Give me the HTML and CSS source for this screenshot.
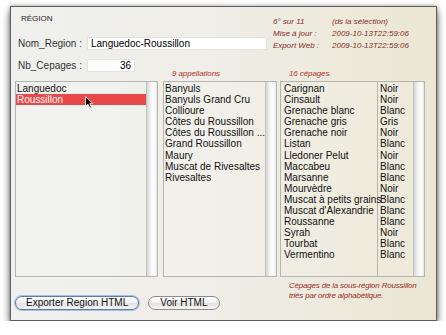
FILE: index.html
```html
<!DOCTYPE html>
<html>
<head>
<meta charset="utf-8">
<link rel="stylesheet" href="styles.css">
<title>Région</title>
</head>
<body>
<div class="window">
    <div class="top">
        <div class="form">
            <div class="title">RÉGION</div>
            <div class="field first">
                <label>Nom_Region :</label>
                <input class="name" value="Languedoc-Roussillon">
            </div>
            <div class="field">
                <label>Nb_Cepages :</label>
                <input class="num" value="36">
            </div>
        </div>
        <div class="info">
            <span>6° sur 11</span><span>(ds la sélection)</span>
            <span>Mise à jour :</span><span>2009-10-13T22:59:06</span>
            <span>Export Web :</span><span>2009-10-13T22:59:06</span>
        </div>
    </div>

    <div class="panes">
        <div class="pane regions">
            <div class="count"></div>
            <div class="listbox">
                <div class="items">
                    <div class="row">Languedoc</div>
                    <div class="row selected">Roussillon</div>
                </div>
                <div class="scroll"></div>
            </div>
        </div>
        <div class="pane appellations">
            <div class="count">9 appellations</div>
            <div class="listbox">
                <div class="items">
                    <div class="row">Banyuls</div>
                    <div class="row">Banyuls Grand Cru</div>
                    <div class="row">Collioure</div>
                    <div class="row">Côtes du Roussillon</div>
                    <div class="row">Côtes du Roussillon ...</div>
                    <div class="row">Grand Roussillon</div>
                    <div class="row">Maury</div>
                    <div class="row">Muscat de Rivesaltes</div>
                    <div class="row">Rivesaltes</div>
                </div>
                <div class="scroll"></div>
            </div>
        </div>
        <div class="pane cepages">
            <div class="count">16 cépages.</div>
            <div class="listbox">
                <div class="items names">
                    <div class="row">Carignan</div>
                    <div class="row">Cinsault</div>
                    <div class="row">Grenache blanc</div>
                    <div class="row">Grenache gris</div>
                    <div class="row">Grenache noir</div>
                    <div class="row">Listan</div>
                    <div class="row">Lledoner Pelut</div>
                    <div class="row">Maccabeu</div>
                    <div class="row">Marsanne</div>
                    <div class="row">Mourvèdre</div>
                    <div class="row">Muscat à petits grains</div>
                    <div class="row">Muscat d'Alexandrie</div>
                    <div class="row">Roussanne</div>
                    <div class="row">Syrah</div>
                    <div class="row">Tourbat</div>
                    <div class="row">Vermentino</div>
                </div>
                <div class="items types">
                    <div class="row">Noir</div>
                    <div class="row">Noir</div>
                    <div class="row">Blanc</div>
                    <div class="row">Gris</div>
                    <div class="row">Noir</div>
                    <div class="row">Blanc</div>
                    <div class="row">Noir</div>
                    <div class="row">Blanc</div>
                    <div class="row">Blanc</div>
                    <div class="row">Noir</div>
                    <div class="row">Blanc</div>
                    <div class="row">Blanc</div>
                    <div class="row">Blanc</div>
                    <div class="row">Noir</div>
                    <div class="row">Blanc</div>
                    <div class="row">Blanc</div>
                </div>
                <div class="scroll"></div>
            </div>
        </div>
    </div>

    <div class="bottom">
        <div class="buttons">
            <button class="default">Exporter Region HTML</button>
            <button>Voir HTML</button>
        </div>
        <div class="note">
            Cépages de la sous-région Roussillon<br>
            triés par ordre alphabétique.
        </div>
    </div>

    <svg class="cursor" width="9" height="13" viewBox="0 0 9 13">
        <path d="M0.5 0.5 L0.5 10.5 L3 8.2 L4.8 12 L6.4 11.3 L4.7 7.6 L8 7.6 Z" fill="#000" stroke="#fff" stroke-width="0.8"/>
    </svg>
</div>
</body>
</html>
```

FILE: styles.css
```css
html {
    background-color: white;
}
body {
    margin: 0;
    font-family: "Liberation Sans", Arial, sans-serif;
    font-size: 10px;
    color: #111;
}
.window {
    position: relative;
    box-sizing: border-box;
    margin: 6px 0 0 10px;
    width: 427px;
    height: 315px;
    border: 1px solid #5e5e5e;
    background: linear-gradient(90deg, #f0f0ee 0%, #efeee8 45%, #ece7d3 100%);
    box-shadow: 0 5px 8px rgba(0, 0, 0, 0.55), 0 0 4px rgba(0, 0, 0, 0.35);
}

/* top part: form and info */
.top {
    display: flex;
    height: 61px;
}
.form {
    width: 255px;
    padding-left: 7px;
}
.title {
    padding: 6px 0 0 3px;
    font-size: 8px;
    line-height: 12px;
    color: #222;
}
.field {
    display: flex;
    align-items: center;
    height: 14px;
    margin-top: 8px;
}
.field.first {
    margin-top: 11px;
}
.field label {
    width: 69px;
    color: #333;
}
.field input {
    box-sizing: border-box;
    height: 13px;
    border: 1px solid #e2e2de;
    background: white;
    font: 10px "Liberation Sans", Arial, sans-serif;
    color: #000;
    padding: 0 3px;
}
.name {
    width: 180px;
}
.num {
    width: 48px;
    text-align: right;
}
.info {
    display: grid;
    grid-template-columns: 59px auto;
    align-content: start;
    padding-top: 9px;
    font-size: 8px;
    font-style: italic;
    line-height: 12px;
    color: #8c2a2a;
}

/* lists */
.panes {
    display: flex;
    padding-left: 4px;
}
.pane {
    display: flex;
    flex-direction: column;
}
.regions {
    width: 143px;
}
.appellations {
    width: 114px;
    margin-left: 5px;
}
.cepages {
    width: 145px;
    margin-left: 3px;
}
.count {
    height: 13px;
    padding-left: 9px;
    font-size: 8px;
    font-style: italic;
    letter-spacing: -0.1px;
    line-height: 12px;
    color: #b8302c;
}
.listbox {
    display: flex;
    height: 196px;
    box-sizing: border-box;
    border: 1px solid #b4b4b0;
    background: rgba(255, 255, 255, 0.12);
}
.items {
    flex: 1;
    padding-top: 1px;
}
.row {
    height: 11.1px;
    line-height: 11px;
    padding-left: 1px;
    white-space: nowrap;
    overflow: hidden;
}
.selected {
    background: #e84848;
    color: white;
}
.cepages .names {
    flex: none;
    width: 96px;
    border-right: 1px solid #b4b4b0;
}
.cepages .names .row {
    padding-left: 3px;
    overflow: visible;
}
.cepages .types .row {
    padding-left: 2px;
}
.scroll {
    width: 10px;
    border-left: 1px solid #c2c2c0;
    background: linear-gradient(90deg, #d4d4d2, #f2f2f2 35%, #ffffff 70%, #e6e6e4);
}

/* bottom part */
.bottom {
    display: flex;
    padding-left: 4px;
}
.buttons {
    display: flex;
    align-items: flex-start;
    gap: 9px;
    width: 274px;
    padding-top: 19px;
}
button {
    height: 14px;
    padding: 0 11px;
    border: 1px solid #8c8c8c;
    border-radius: 7px;
    background: linear-gradient(#ffffff, #f0f0f0 50%, #e2e2e2 51%, #f6f6f6);
    font: 10px "Liberation Sans", Arial, sans-serif;
    line-height: 12px;
    color: #111;
}
button.default {
    border: 1px solid #5a7eac;
    box-shadow: 0 0 0 1px #a9bfdc;
    padding: 0 10px;
}
.note {
    padding-top: 4px;
    font-size: 8px;
    font-style: italic;
    letter-spacing: -0.2px;
    line-height: 10px;
    color: #a02a2a;
}
.cursor {
    position: absolute;
    left: 74px;
    top: 89px;
}
```
